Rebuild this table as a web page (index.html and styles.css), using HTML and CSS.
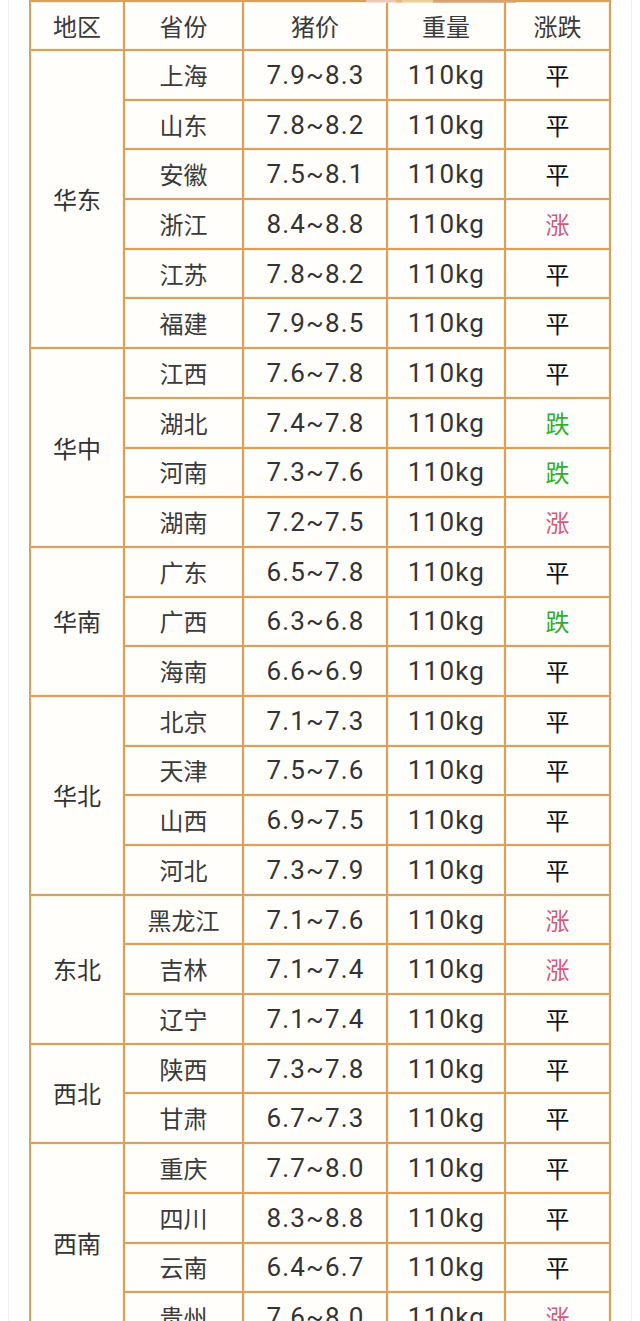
FILE: index.html
```html
<!DOCTYPE html>
<html lang="zh">
<head>
<meta charset="utf-8">
<title>猪价表</title>
<link rel="stylesheet" href="styles.css">
</head>
<body>
<div class="frame">
  <div class="title-strip"></div>
  <table class="price">
    <colgroup>
      <col class="c-region"><col class="c-prov"><col class="c-price"><col class="c-weight"><col class="c-trend">
    </colgroup>
    <thead>
      <tr class="head"><th>地区</th><th>省份</th><th>猪价</th><th>重量</th><th>涨跌</th></tr>
    </thead>
    <tbody>
      <tr><td class="region" rowspan="6">华东</td><td class="cn">上海</td><td class="num">7.9~8.3</td><td class="num">110kg</td><td class="flat">平</td></tr>
      <tr><td class="cn">山东</td><td class="num">7.8~8.2</td><td class="num">110kg</td><td class="flat">平</td></tr>
      <tr><td class="cn">安徽</td><td class="num">7.5~8.1</td><td class="num">110kg</td><td class="flat">平</td></tr>
      <tr><td class="cn">浙江</td><td class="num">8.4~8.8</td><td class="num">110kg</td><td class="up">涨</td></tr>
      <tr><td class="cn">江苏</td><td class="num">7.8~8.2</td><td class="num">110kg</td><td class="flat">平</td></tr>
      <tr><td class="cn">福建</td><td class="num">7.9~8.5</td><td class="num">110kg</td><td class="flat">平</td></tr>

      <tr><td class="region" rowspan="4">华中</td><td class="cn">江西</td><td class="num">7.6~7.8</td><td class="num">110kg</td><td class="flat">平</td></tr>
      <tr><td class="cn">湖北</td><td class="num">7.4~7.8</td><td class="num">110kg</td><td class="down">跌</td></tr>
      <tr><td class="cn">河南</td><td class="num">7.3~7.6</td><td class="num">110kg</td><td class="down">跌</td></tr>
      <tr><td class="cn">湖南</td><td class="num">7.2~7.5</td><td class="num">110kg</td><td class="up">涨</td></tr>

      <tr><td class="region" rowspan="3">华南</td><td class="cn">广东</td><td class="num">6.5~7.8</td><td class="num">110kg</td><td class="flat">平</td></tr>
      <tr><td class="cn">广西</td><td class="num">6.3~6.8</td><td class="num">110kg</td><td class="down">跌</td></tr>
      <tr><td class="cn">海南</td><td class="num">6.6~6.9</td><td class="num">110kg</td><td class="flat">平</td></tr>

      <tr><td class="region" rowspan="4">华北</td><td class="cn">北京</td><td class="num">7.1~7.3</td><td class="num">110kg</td><td class="flat">平</td></tr>
      <tr><td class="cn">天津</td><td class="num">7.5~7.6</td><td class="num">110kg</td><td class="flat">平</td></tr>
      <tr><td class="cn">山西</td><td class="num">6.9~7.5</td><td class="num">110kg</td><td class="flat">平</td></tr>
      <tr><td class="cn">河北</td><td class="num">7.3~7.9</td><td class="num">110kg</td><td class="flat">平</td></tr>

      <tr><td class="region" rowspan="3">东北</td><td class="cn">黑龙江</td><td class="num">7.1~7.6</td><td class="num">110kg</td><td class="up">涨</td></tr>
      <tr><td class="cn">吉林</td><td class="num">7.1~7.4</td><td class="num">110kg</td><td class="up">涨</td></tr>
      <tr><td class="cn">辽宁</td><td class="num">7.1~7.4</td><td class="num">110kg</td><td class="flat">平</td></tr>

      <tr><td class="region" rowspan="2">西北</td><td class="cn">陕西</td><td class="num">7.3~7.8</td><td class="num">110kg</td><td class="flat">平</td></tr>
      <tr><td class="cn">甘肃</td><td class="num">6.7~7.3</td><td class="num">110kg</td><td class="flat">平</td></tr>

      <tr><td class="region" rowspan="4">西南</td><td class="cn">重庆</td><td class="num">7.7~8.0</td><td class="num">110kg</td><td class="flat">平</td></tr>
      <tr><td class="cn">四川</td><td class="num">8.3~8.8</td><td class="num">110kg</td><td class="flat">平</td></tr>
      <tr><td class="cn">云南</td><td class="num">6.4~6.7</td><td class="num">110kg</td><td class="flat">平</td></tr>
      <tr><td class="cn">贵州</td><td class="num">7.6~8.0</td><td class="num">110kg</td><td class="up">涨</td></tr>
    </tbody>
  </table>
</div>
</body>
</html>
```

FILE: styles.css
```css
html, body {
  margin: 0;
  padding: 0;
  background: #ffffff;
  height: 1321px;
  overflow: hidden;
}

.frame {
  position: relative;
  margin: 0 8px;
  padding-left: 20px;
  border-left: 1px solid #f0f0f0;
  border-right: 1px solid #f0f0f0;
  height: 1400px;
}

.title-strip {
  position: absolute;
  top: 0;
  left: 357px;
  width: 150px;
  height: 3px;
  background: linear-gradient(90deg, #f9d9dc 0 20%, #e8c08a 20% 24%, #f3e2b0 24% 45%, #d9a27a 45% 100%);
  opacity: 0.7;
}

.price {
  border-collapse: collapse;
  table-layout: fixed;
  width: 582px;
  font-family: "Noto Sans CJK SC", "Noto Sans", sans-serif;
  color: #333333;
}

.c-region { width: 94px; }
.c-prov { width: 119px; }
.c-price { width: 144px; }
.c-weight { width: 118px; }
.c-trend { width: 105px; }

.price th,
.price td {
  border: 2px solid #d6a262;
  box-shadow: inset 0 0 0 1px #fcf1dc;
  text-align: center;
  vertical-align: middle;
  padding: 0;
  height: 47.7px;
  font-size: 24px;
  font-weight: normal;
  line-height: 1;
  background: #fffefb;
}

.price .head th {
  height: 47px;
  color: #3a3a3a;
}

.region {
  color: #333333;
}

.cn {
  color: #3a3a3a;
}

.price td.num {
  font-family: Roboto, "Noto Sans", sans-serif;
  font-size: 26px;
  letter-spacing: 1.2px;
  padding-left: 1px;
  color: #333333;
}

.flat {
  color: #111111;
  font-weight: 500;
}

.price td.up {
  color: #d25b7c;
}

.price td.down {
  color: #2fae2f;
}
```
